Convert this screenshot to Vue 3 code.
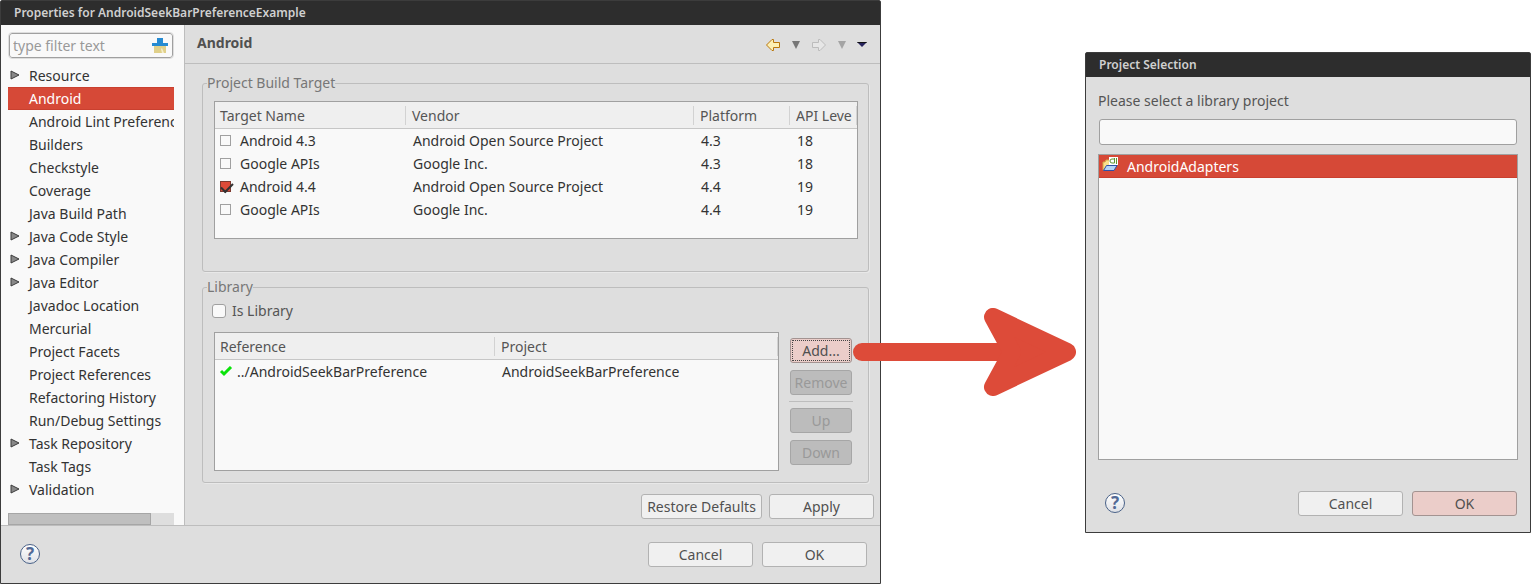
<script setup>
import { ref } from 'vue'

const tree = [
  { name: 'Resource', parent: true },
  { name: 'Android' },
  { name: 'Android Lint Preferences' },
  { name: 'Builders' },
  { name: 'Checkstyle' },
  { name: 'Coverage' },
  { name: 'Java Build Path' },
  { name: 'Java Code Style', parent: true },
  { name: 'Java Compiler', parent: true },
  { name: 'Java Editor', parent: true },
  { name: 'Javadoc Location' },
  { name: 'Mercurial' },
  { name: 'Project Facets' },
  { name: 'Project References' },
  { name: 'Refactoring History' },
  { name: 'Run/Debug Settings' },
  { name: 'Task Repository', parent: true },
  { name: 'Task Tags' },
  { name: 'Validation', parent: true }
]
const selected = ref('Android')
const filter = ref('')
const query = ref('')
const isLibrary = ref(false)

const targets = ref([
  { name: 'Android 4.3', vendor: 'Android Open Source Project', platform: '4.3', api: 18, on: false },
  { name: 'Google APIs', vendor: 'Google Inc.', platform: '4.3', api: 18, on: false },
  { name: 'Android 4.4', vendor: 'Android Open Source Project', platform: '4.4', api: 19, on: true },
  { name: 'Google APIs', vendor: 'Google Inc.', platform: '4.4', api: 19, on: false }
])
</script>

<template>
  <div class="stage">
    <section class="window properties" aria-label="Properties">
      <header class="titlebar">Properties for AndroidSeekBarPreferenceExample</header>
      <div class="body">
        <aside class="sidebar">
          <div class="filter">
            <input v-model="filter" type="text" placeholder="type filter text" aria-label="Filter" />
            <button type="button" class="clear" aria-label="Clear">
              <svg width="16" height="15" viewBox="0 0 16 15">
                <path d="M5 0h6v5h5v3H0V5h5z" fill="#268bd2" />
                <path d="M2 8h12v7H2z" fill="#e0d08a" />
                <path d="M9 11l1-1l2 5h-2z" fill="#f4eecb" />
              </svg>
            </button>
          </div>
          <ul class="tree">
            <li v-for="item in tree" :key="item.name">
              <button type="button" :class="{ active: item.name === selected }" @click="selected = item.name">
                <span class="twist">
                  <svg v-if="item.parent" width="10" height="10" viewBox="0 0 10 10">
                    <path d="M1 1L9 5L1 9z" fill="#888" stroke="#3c3c3c" />
                  </svg>
                </span>{{ item.name }}
              </button>
            </li>
          </ul>
          <div class="scroll"><div class="thumb"></div></div>
        </aside>

        <main class="page">
          <div class="head">
            <h1>Android</h1>
            <nav class="history">
              <button type="button" aria-label="Back">
                <svg width="16" height="14" viewBox="0 0 16 14">
                  <path d="M1.500 7L7 1.500H8.500V4.500H14.500V9.500H8.500V12.500H7z" fill="#fdf0b4" stroke="#b9770e" />
                </svg>
              </button>
              <button type="button" aria-label="Back history">
                <svg width="8" height="8" viewBox="0 0 8 8"><path d="M0 0H8L4 8z" fill="#777" /></svg>
              </button>
              <button type="button" aria-label="Forward">
                <svg width="16" height="14" viewBox="0 0 16 14">
                  <path d="M14.500 7L9 1.500H7.500V4.500H1.500V9.500H7.500V12.500H9z" fill="#e6e6e6" stroke="#bcbcbc" />
                </svg>
              </button>
              <button type="button" aria-label="Forward history">
                <svg width="8" height="8" viewBox="0 0 8 8"><path d="M0 0H8L4 8z" fill="#a4a4a4" /></svg>
              </button>
              <button type="button" aria-label="Menu">
                <svg width="10" height="6" viewBox="0 0 10 6"><path d="M0 0H10L5 5z" fill="#26235c" /><path d="M0 0H10L9 1H1z" fill="#111" /></svg>
              </button>
            </nav>
          </div>

          <div class="content">
            <fieldset class="build">
              <legend>Project Build Target</legend>
              <div class="frame">
                <table>
                  <colgroup>
                    <col class="c-name" /><col /><col class="c-platform" /><col class="c-api" />
                  </colgroup>
                  <thead>
                    <tr><th>Target Name</th><th>Vendor</th><th>Platform</th><th><span>API Level</span></th></tr>
                  </thead>
                  <tbody>
                    <tr v-for="(t, i) in targets" :key="i">
                      <td>
                        <label class="pick"><input v-model="t.on" type="checkbox" />{{ t.name }}</label>
                      </td>
                      <td>{{ t.vendor }}</td>
                      <td>{{ t.platform }}</td>
                      <td>{{ t.api }}</td>
                    </tr>
                  </tbody>
                </table>
              </div>
            </fieldset>

            <fieldset class="library">
              <legend>Library</legend>
              <label class="islib"><input v-model="isLibrary" type="checkbox" />Is Library</label>
              <div class="refs">
                <div class="frame">
                  <table>
                    <colgroup><col class="c-ref" /><col /></colgroup>
                    <thead>
                      <tr><th>Reference</th><th>Project</th></tr>
                    </thead>
                    <tbody>
                      <tr>
                        <td>
                          <span class="found">
                            <svg width="14" height="11" viewBox="0 0 14 11">
                              <path d="M2 5L5 8L12 1" fill="none" stroke="#0be30b" stroke-width="3" />
                            </svg>../AndroidSeekBarPreference
                          </span>
                        </td>
                        <td>AndroidSeekBarPreference</td>
                      </tr>
                    </tbody>
                  </table>
                </div>
                <div class="side">
                  <button type="button" class="btn primary focus">Add...</button>
                  <button type="button" class="btn" disabled>Remove</button>
                  <hr />
                  <button type="button" class="btn" disabled>Up</button>
                  <button type="button" class="btn" disabled>Down</button>
                </div>
              </div>
            </fieldset>

            <div class="actions">
              <button type="button" class="btn long">Restore Defaults</button>
              <button type="button" class="btn wide">Apply</button>
            </div>
          </div>
        </main>
      </div>
      <footer class="footer">
        <button type="button" class="help" aria-label="Help">?</button>
        <button type="button" class="btn wide">Cancel</button>
        <button type="button" class="btn wide">OK</button>
      </footer>
    </section>

    <div class="between">
      <svg class="arrow" width="223" height="88" viewBox="0 0 223 88">
        <g stroke="#dd4b39" stroke-width="18" stroke-linejoin="round" stroke-linecap="round" fill="#dd4b39">
          <path d="M9 44H160" />
          <path d="M140 9L214 44L140 79L159 44z" />
        </g>
      </svg>
    </div>

    <section class="window dialog" aria-label="Project Selection">
      <header class="titlebar">Project Selection</header>
      <div class="choose">
        <label for="query">Please select a library project</label>
        <input id="query" v-model="query" type="text" />
        <ul class="list">
          <li>
            <button type="button">
              <svg width="16" height="16" viewBox="0 0 16 16">
                <path d="M1 13V5h2l1-2h4l1 2h3v8z" fill="#fbe08d" stroke="#d6a545" />
                <path d="M7 0h9v8H7z" fill="#fff" />
                <path d="M12.500 1v5h-2.500a2 2 0 0 1 0-4h2.500" fill="none" stroke="#5f9430" />
                <path d="M14.500 1v6" stroke="#5f9430" />
                <path d="M4.500 8.500H15L12 13.500H1.500z" fill="#b5d4f7" stroke="#2f50a8" />
              </svg>AndroidAdapters
            </button>
          </li>
        </ul>
        <div class="confirm">
          <button type="button" class="help" aria-label="Help">?</button>
          <button type="button" class="btn wide">Cancel</button>
          <button type="button" class="btn wide primary">OK</button>
        </div>
      </div>
    </section>
  </div>
</template>

<style>
body {
  margin: 0;
  background: #fff;
}
</style>

<style scoped>
.stage {
  display: grid;
  grid-template-columns: minmax(0, 881fr) minmax(0, 204fr) minmax(0, 446fr);
  align-items: start;
  min-height: 100vh;
  font: 14px/23px "Noto Sans", "Open Sans", sans-serif;
  color: #333;
}
.stage * {
  box-sizing: border-box;
}
button,
input {
  font: inherit;
  color: inherit;
  margin: 0;
}
svg {
  display: block;
  flex: none;
}
.window {
  border: 1px solid #3c3c3c;
  border-radius: 2px 2px 0 0;
  background: #dedede;
}
.titlebar {
  height: 24px;
  padding-left: 13px;
  background: #2d2d2d;
  color: #d0d0d0;
  font-size: 12px;
  font-weight: 600;
  line-height: 24px;
  white-space: nowrap;
}
.body {
  display: flex;
}

/* Sidebar */
.sidebar {
  display: flex;
  flex-direction: column;
  flex: 0 0 184px;
  min-width: 0;
  padding: 8px 10px 0 7px;
  border-right: 1px solid #bdbdbd;
  background: #f9f9f9;
}
.filter {
  display: flex;
  align-items: center;
  height: 25px;
  margin: 0 1px;
  padding: 0 4px 0 3px;
  border: 1px solid #a0a0a0;
  border-radius: 3px;
  outline: 1px solid #dedede;
}
.filter input {
  flex: 1;
  min-width: 0;
  padding: 0;
  border: 0;
  outline: 0;
  background: none;
}
.filter input::placeholder {
  color: #999;
  opacity: 1;
}
.clear {
  padding: 0;
  border: 0;
  background: none;
}
.tree,
.list {
  margin: 0;
  padding: 0;
  list-style: none;
}
.tree {
  margin-top: 6px;
}
.tree button {
  display: flex;
  align-items: center;
  width: 100%;
  height: 23px;
  padding: 0;
  border: 0;
  background: none;
  overflow: hidden;
  white-space: nowrap;
}
.tree .active {
  background: #d64937;
  box-shadow: inset 0 1px #c9402f, inset 0 -1px #c9402f;
  color: #fff;
}
.twist {
  flex: 0 0 21px;
  padding: 0 0 2px 2px;
}
.scroll {
  height: 12px;
  margin-top: auto;
  background: #dedede;
}
.thumb {
  width: 86%;
  height: 12px;
  border: 1px solid #a6a6a6;
  background: #bfbfbf;
}

/* Page */
.page {
  flex: 1;
  min-width: 0;
}
.head {
  display: flex;
  justify-content: space-between;
  align-items: center;
  height: 39px;
  padding: 0 13px 0 12px;
  border-bottom: 1px solid #bdbdbd;
}
h1 {
  margin: 0;
  padding-bottom: 4px;
  color: #505050;
  font-size: 14px;
  font-weight: 700;
}
.history {
  display: flex;
  align-items: center;
  gap: 11px;
  padding-top: 2px;
}
.history button {
  padding: 0;
  border: 0;
  background: none;
}
.content {
  padding: 8px 6px 6px 17px;
}
fieldset {
  min-width: 0;
  margin: 0 5px 4px 0;
  padding: 6px 10px 32px 4px;
  border: 1px solid #bdbdbd;
  border-radius: 3px;
  box-shadow: 1px 1px #e8e8e8;
}
fieldset.library {
  margin-bottom: 11px;
  padding-top: 0;
  padding-bottom: 11px;
}
legend {
  height: 23px;
  padding: 0;
  color: #777;
  line-height: 21px;
}
.frame {
  min-height: 138px;
  margin-left: 7px;
  border: 1px solid #a0a0a0;
  background: #f9f9f9;
  overflow: hidden;
}
table {
  width: 100%;
  border-collapse: separate;
  border-spacing: 0;
  table-layout: fixed;
}
.c-name {
  width: 191px;
}
.c-platform {
  width: 96px;
}
.c-api {
  width: 67px;
}
.c-ref {
  width: 280px;
}
th,
td {
  padding: 0 0 0 7px;
  text-align: left;
  font-weight: 400;
  white-space: nowrap;
  overflow: hidden;
}
th {
  height: 27px;
  padding: 0 5px 0 6px;
  border-bottom: 1px solid #c6c6c6;
  background: linear-gradient(#d2d2d2, #d2d2d2) no-repeat right center / 1px 19px, #efefef;
  color: #555;
}
th:first-child,
td:first-child {
  padding-left: 5px;
}
th span {
  display: block;
  overflow: hidden;
}
td {
  height: 23px;
}
.pick,
.islib,
.found {
  display: flex;
  align-items: center;
}
input[type="checkbox"] {
  flex: none;
  appearance: none;
  width: 11px;
  height: 11px;
  margin-right: 9px;
  border: 1px solid #a0a0a0;
  background: #f9f9f9;
}
input[type="checkbox"]:checked {
  border-color: #7e3a30;
  background: #dd4b39;
}
input[type="checkbox"]:checked::before {
  content: "";
  display: block;
  width: 10px;
  height: 5px;
  border: solid #333;
  border-width: 0 0 2px 2px;
  transform: translateY(1px) rotate(-45deg);
}
.islib {
  width: max-content;
  height: 23px;
  margin-left: 5px;
  color: #555;
}
.islib input[type="checkbox"] {
  width: 14px;
  height: 14px;
  margin-right: 6px;
  border-radius: 3px;
}
.found {
  gap: 4px;
  margin-left: -1px;
}
.refs {
  display: flex;
  align-items: flex-start;
  gap: 10px;
  margin: 10px 5px 0 0;
}
.refs .frame {
  flex: 1;
  min-width: 0;
  min-height: 139px;
}
.side {
  display: flex;
  flex: 0 0 64px;
  flex-direction: column;
  gap: 7px;
  padding-top: 6px;
}
.side .btn {
  margin: 0 1px;
}
.side hr {
  width: 100%;
  height: 1px;
  margin: -1px 0;
  border: 0;
  background: #bdbdbd;
}
.actions {
  display: flex;
  justify-content: flex-end;
  gap: 7px;
}

/* Buttons */
.btn {
  height: 25px;
  padding: 0;
  border: 1px solid #b2b2b2;
  border-radius: 3px;
  background: #f0f0f0;
  color: #505050;
  white-space: nowrap;
}
.btn:disabled {
  border-color: #a6a6a6;
  background: #bcbcbc;
  color: #999;
}
.primary {
  border-color: #a39391;
  background: #ebcdc9;
}
.focus {
  outline: 1px dotted #444;
  outline-offset: -3px;
}
.wide {
  width: 105px;
}
.long {
  width: 121px;
}
.help {
  width: 20px;
  height: 20px;
  margin: 0 auto 2px 0;
  padding: 0;
  border: 1px solid #4a6288;
  border-radius: 50%;
  background: linear-gradient(#fff, #dfe1e6);
  color: #526a96;
  font-size: 17px;
  font-weight: 700;
  line-height: 18px;
}
.footer,
.confirm {
  display: flex;
  align-items: center;
  gap: 9px;
}
.footer {
  height: 58px;
  padding: 0 13px 0 19px;
  border-top: 1px solid #bdbdbd;
}

/* Callout arrow */
.between {
  position: relative;
  align-self: stretch;
}
.arrow {
  position: absolute;
  top: 308px;
  left: -28px;
}

/* Project dialog */
.dialog {
  margin-top: 52px;
}
.choose {
  display: flex;
  flex-direction: column;
  padding: 12px;
}
.choose label {
  color: #555;
}
.choose > input {
  height: 26px;
  margin: 7px 1px 9px;
  padding: 0 6px;
  border: 1px solid #a0a0a0;
  border-radius: 3px;
  background: #f9f9f9;
}
.list {
  min-height: 306px;
  border: 1px solid #a0a0a0;
  background: #f9f9f9;
}
.list button {
  display: flex;
  align-items: center;
  gap: 9px;
  width: 100%;
  height: 23px;
  padding: 0 3px;
  border: 0;
  border-bottom: 1px solid #c9402f;
  background: #d64937;
  color: #fff;
}
.list svg {
  margin-bottom: 2px;
}
.confirm {
  margin: 31px 1px 4px 7px;
}
</style>
